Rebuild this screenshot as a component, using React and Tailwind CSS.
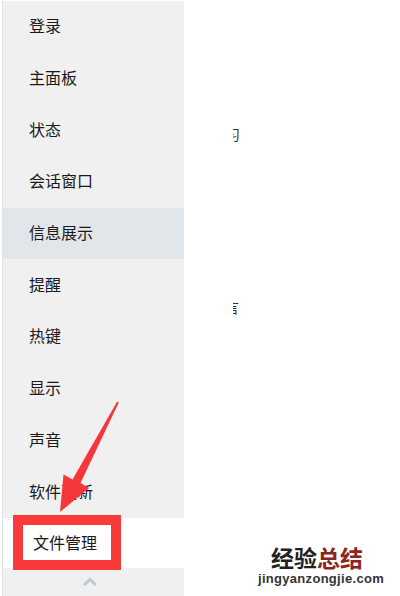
import React from "react";

const items = ["登录", "主面板", "状态", "会话窗口", "信息展示", "提醒", "热键", "显示", "声音", "软件更新"];

export default function App() {
  return (
    <div
      className="relative w-[400px] h-[596px] bg-white overflow-hidden flex"
      style={{ fontFamily: '"Microsoft YaHei", "Noto Sans CJK SC", sans-serif' }}
    >
      <div className="mt-[1px] ml-[2px] w-[182px] h-[595px] bg-[#f0f0f0] border-l border-[#e2e2e2] flex flex-col">
        {items.map((t, i) => (
          <div
            key={t}
            className={`h-[51.7px] shrink-0 flex items-center pl-[26px] pb-[3px] text-[16px] text-[#1a1a1a] ${
              i === 4 ? "bg-[#e1e6eb]" : ""
            }`}
          >
            {t}
          </div>
        ))}
        <div className="h-[50px] shrink-0 bg-white flex items-center pl-[26px] text-[16px] text-[#1a1a1a]">
          <div className="-ml-[16px] border-[10px] border-[#f83a3a] px-[10px] pb-[2px] h-[55px] w-[108px] flex items-center">
            文件管理
          </div>
        </div>
        <div className="flex-1 flex justify-center pt-[9px] pr-[8px]">
          <svg width="16" height="9" viewBox="0 0 16 9">
            <polyline points="2,8 8,2.5 14,8" fill="none" stroke="#bcc8d4" strokeWidth="3" />
          </svg>
        </div>
      </div>

      <div className="flex-1 relative">
        <div className="absolute left-[49px] top-[125px] w-[7px] h-[18px] overflow-hidden text-[14px] leading-[18px] text-[#333]">
          <span className="block -ml-[7px]">习</span>
        </div>
        <div className="absolute left-[49px] top-[298px] w-[6px] h-[18px] overflow-hidden text-[14px] leading-[18px] text-[#333]">
          <span className="block -ml-[8px]">言</span>
        </div>
      </div>

      <svg className="absolute left-0 top-0 pointer-events-none" width="400" height="596">
        <polygon
          points="117.2,401.5 118.8,402.5 80.5,483 89,488 60,512 63.5,474.5 72.5,479.5"
          fill="#f5363a"
        />
      </svg>

      <div className="absolute left-[247px] top-[545px] w-[140px] flex flex-col items-center">
        <div className="text-[23px] leading-[24px] font-bold">
          <span className="text-[#222]">经验</span>
          <span className="text-[#8e2323]">总结</span>
        </div>
        <div
          className="mt-[3px] ml-[8px] text-[13px] leading-[14px] text-[#333] tracking-[0.3px] font-bold"
          style={{ fontFamily: '"Liberation Sans", sans-serif' }}
        >
          jingyanzongjie.com
        </div>
      </div>
    </div>
  );
}
